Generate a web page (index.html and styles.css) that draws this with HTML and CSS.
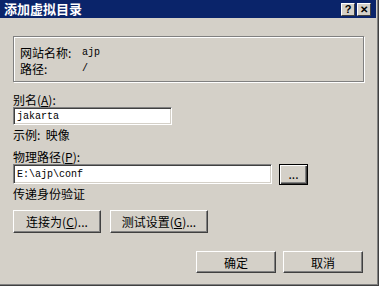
FILE: index.html
```html
<!DOCTYPE html>
<html lang="zh-CN">
<head>
    <meta charset="UTF-8">
    <title>添加虚拟目录</title>
    <link rel="stylesheet" href="styles.css">
</head>
<body>
    <div class="dialog">
        <div class="titlebar">
            <span class="title">添加虚拟目录</span>
            <span class="caption-btn">?</span>
            <span class="caption-btn close">✕</span>
        </div>

        <div class="content">
            <div class="group">
                <div class="info-row"><span class="info-label">网站名称:</span><span class="info-value">ajp</span></div>
                <div class="info-row"><span class="info-label">路径:</span><span class="info-value">/</span></div>
            </div>

            <div class="label first">别名(<u>A</u>):</div>
            <div class="field alias">jakarta</div>
            <div class="label">示例:&nbsp; 映像</div>

            <div class="label path-label">物理路径(<u>P</u>):</div>
            <div class="path-row">
                <div class="field path">E:\ajp\conf</div>
                <button class="btn browse">...</button>
            </div>
            <div class="label">传递身份验证</div>

            <div class="btn-row">
                <button class="btn connect">连接为(<u>C</u>)...</button>
                <button class="btn test">测试设置(<u>G</u>)...</button>
            </div>

            <div class="footer-row">
                <button class="btn ok">确定</button>
                <button class="btn cancel">取消</button>
            </div>
        </div>
    </div>
</body>
</html>
```

FILE: styles.css
```css
/* Classic dialog */
body {
    margin: 0;
    padding: 0;
    background-color: #d4d0c8;
    font-family: "Noto Sans CJK SC", "Liberation Sans", sans-serif;
    font-size: 12px;
    color: #000;
}
.dialog {
    width: 379px;
    height: 286px;
    box-sizing: border-box;
    background-color: #d4d0c8;
    border-right: 1px solid #404040;
    border-bottom: 1px solid #404040;
    box-shadow: inset -1px -1px 0 #808080;
    padding: 0 2px 2px 0;
    display: flex;
    flex-direction: column;
}
.titlebar {
    height: 18px;
    background-color: #0a246a;
    display: flex;
    align-items: center;
    padding: 0 5px 0 4px;
}
.title {
    flex: 1;
    color: white;
    font-weight: bold;
    font-size: 13px;
    line-height: 18px;
}
.caption-btn {
    width: 14px;
    height: 13px;
    margin-left: 2px;
    box-sizing: border-box;
    background-color: #d4d0c8;
    border-top: 1px solid #fff;
    border-left: 1px solid #fff;
    border-right: 1px solid #404040;
    border-bottom: 1px solid #404040;
    font-family: "Liberation Sans", sans-serif;
    font-weight: bold;
    font-size: 11px;
    line-height: 11px;
    text-align: center;
}
.caption-btn.close {
    font-size: 10px;
}
.content {
    padding: 18px 0 0 13px;
}
.group {
    width: 351px;
    height: 46px;
    box-sizing: border-box;
    border: 1px solid #808080;
    box-shadow: 1px 1px 0 #fff, inset 1px 1px 0 #fff;
    padding: 8px 0 0 6px;
}
.info-row {
    height: 16px;
    line-height: 16px;
    display: flex;
}
.info-label {
    width: 62px;
}
.info-value {
    font-family: "Liberation Mono", monospace;
    font-size: 10px;
}
.label {
    line-height: 15px;
    height: 15px;
    margin-top: 2px;
}
.label.first {
    margin-top: 10px;
}
.label.path-label {
    margin-top: 7px;
}
.label u {
    text-underline-offset: 1px;
}
.field {
    box-sizing: border-box;
    background-color: white;
    border-top: 1px solid #808080;
    border-left: 1px solid #808080;
    border-right: 1px solid #fff;
    border-bottom: 1px solid #fff;
    box-shadow: inset 1px 1px 0 #404040, inset -1px -1px 0 #d4d0c8;
    font-family: "Liberation Mono", monospace;
    font-size: 10px;
    padding-left: 3px;
    display: flex;
    align-items: center;
}
.field.alias {
    width: 159px;
    height: 18px;
}
.path-row {
    display: flex;
    align-items: center;
    height: 20px;
}
.field.path {
    width: 259px;
    height: 20px;
}
.btn {
    box-sizing: border-box;
    background-color: #d4d0c8;
    border: none;
    border-top: 1px solid #fff;
    border-left: 1px solid #fff;
    border-right: 1px solid #404040;
    border-bottom: 1px solid #404040;
    box-shadow: inset -1px -1px 0 #808080;
    font-family: "Noto Sans CJK SC", "Liberation Sans", sans-serif;
    font-size: 12px;
    color: #000;
    padding: 0;
    margin: 0;
}
.btn.browse {
    width: 29px;
    height: 21px;
    margin-left: 7px;
    border: 1px solid #000;
    box-shadow: inset 1px 1px 0 #fff, inset -1px -1px 0 #404040, inset -2px -2px 0 #808080;
    line-height: 14px;
}
.btn-row {
    display: flex;
    gap: 9px;
    margin-top: 9px;
}
.btn.connect {
    width: 88px;
    height: 23px;
}
.btn.test {
    width: 98px;
    height: 23px;
}
.footer-row {
    display: flex;
    justify-content: flex-end;
    gap: 7px;
    margin-top: 18px;
    padding-right: 13px;
}
.btn.ok, .btn.cancel {
    width: 80px;
    height: 22px;
}
```
